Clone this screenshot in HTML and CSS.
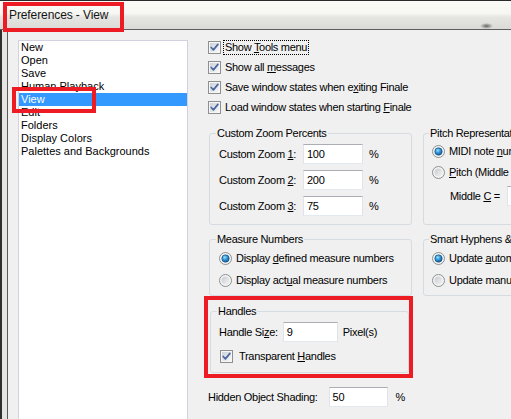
FILE: index.html
```html
<!DOCTYPE html>
<html>
<head>
<meta charset="utf-8">
<title>Preferences - View</title>
<link rel="stylesheet" href="styles.css">
</head>
<body>
<svg class="defs" width="0" height="0" aria-hidden="true">
  <defs>
    <linearGradient id="cbg" x1="0" y1="0" x2="1" y2="1">
      <stop offset="0" stop-color="#cdd1d6"/>
      <stop offset="1" stop-color="#f7f8f9"/>
    </linearGradient>
    <linearGradient id="roff" x1="0" y1="0" x2="1" y2="1">
      <stop offset="0" stop-color="#c8cbcf"/>
      <stop offset="1" stop-color="#f3f4f5"/>
    </linearGradient>
    <radialGradient id="rsel" cx="0.4" cy="0.35" r="0.75">
      <stop offset="0" stop-color="#9ae4fc"/>
      <stop offset="0.45" stop-color="#2f93d6"/>
      <stop offset="1" stop-color="#0b4c8a"/>
    </radialGradient>
    <symbol id="cb" viewBox="0 0 13 13">
      <rect x="0.5" y="0.5" width="12" height="12" fill="#f6f6f6" stroke="#8e8f8f"/>
      <rect x="2" y="2" width="9" height="9" fill="url(#cbg)"/>
      <path d="M3.2 6.5 L5.4 8.9 L9.9 3.4" fill="none" stroke="#4a67a4" stroke-width="1.7" stroke-linecap="round" stroke-linejoin="round"/>
    </symbol>
    <symbol id="rb-on" viewBox="0 0 13 13">
      <circle cx="6.5" cy="6.5" r="6" fill="#f4f4f4" stroke="#8e8f8f"/>
      <circle cx="6.5" cy="6.5" r="3.7" fill="url(#rsel)" stroke="#1d5383" stroke-width="0.7"/>
    </symbol>
    <symbol id="rb-off" viewBox="0 0 13 13">
      <circle cx="6.5" cy="6.5" r="6" fill="#f4f4f4" stroke="#8e8f8f"/>
      <circle cx="6.5" cy="6.5" r="4" fill="url(#roff)"/>
    </symbol>
  </defs>
</svg>

<header class="titlebar">
  <span class="title">Preferences - View</span>
  <span class="glow"></span>
</header>
<div class="annot annot-title"></div>

<div class="content">
  <div class="frame"></div>

  <div class="listpane">
    <ul class="list">
      <li>New</li>
      <li>Open</li>
      <li>Save</li>
      <li>Human Playback</li>
      <li class="sel">View</li>
      <li>Edit</li>
      <li>Folders</li>
      <li>Display Colors</li>
      <li>Palettes and Backgrounds</li>
    </ul>
    <div class="annot annot-view"></div>
  </div>

  <main class="main">
    <div class="checks">
      <label class="chk"><svg class="box"><use href="#cb"/></svg><span class="focus">Show <u>T</u>ools menu</span></label>
      <label class="chk"><svg class="box"><use href="#cb"/></svg><span>Show all <u>m</u>essages</span></label>
      <label class="chk"><svg class="box"><use href="#cb"/></svg><span>Save window states when e<u>x</u>iting Finale</span></label>
      <label class="chk"><svg class="box"><use href="#cb"/></svg><span>Load window states when starting <u>F</u>inale</span></label>
    </div>

    <div class="groups">
      <fieldset class="grp zoom">
        <legend>Custom Zoom Percents</legend>
        <div class="zrow"><span>Custom Zoom <u>1</u>:</span><span class="tb">100</span><span class="unit">%</span></div>
        <div class="zrow"><span>Custom Zoom <u>2</u>:</span><span class="tb">200</span><span class="unit">%</span></div>
        <div class="zrow"><span>Custom Zoom <u>3</u>:</span><span class="tb">75</span><span class="unit">%</span></div>
      </fieldset>

      <fieldset class="grp pitch">
        <legend>Pitch Representation</legend>
        <label class="radio"><svg class="box"><use href="#rb-on"/></svg><span>MIDI note <u>n</u>umber</span></label>
        <label class="radio"><svg class="box"><use href="#rb-off"/></svg><span><u>P</u>itch (Middle C = C4)</span></label>
        <div class="mid"><span>Middle <u>C</u> =</span><span class="tb mid-tb"></span></div>
      </fieldset>

      <fieldset class="grp measure">
        <legend>Measure Numbers</legend>
        <label class="radio"><svg class="box"><use href="#rb-on"/></svg><span>Display <u>d</u>efined measure numbers</span></label>
        <label class="radio"><svg class="box"><use href="#rb-off"/></svg><span>Display act<u>u</u>al measure numbers</span></label>
      </fieldset>

      <fieldset class="grp hyph">
        <legend>Smart Hyphens &amp; Word Extensions</legend>
        <label class="radio"><svg class="box"><use href="#rb-on"/></svg><span>Update <u>a</u>utomatically</span></label>
        <label class="radio"><svg class="box"><use href="#rb-off"/></svg><span>Update manually</span></label>
      </fieldset>
    </div>

    <div class="redwrap">
      <fieldset class="grp handles">
        <legend>Handles</legend>
        <div class="hrow"><span>Handle Si<u>z</u>e:</span><span class="tb hs">9</span><span>Pixel(s)</span></div>
        <label class="chk hchk"><svg class="box"><use href="#cb"/></svg><span>Transparent <u>H</u>andles</span></label>
      </fieldset>
    </div>

    <div class="shade"><span>Hidden Ob<u>j</u>ect Shading:</span><span class="tb sh">50</span><span>%</span></div>
  </main>
</div>
</body>
</html>
```

FILE: styles.css
```css
* { box-sizing: border-box; }
html, body { margin: 0; padding: 0; }
body {
  width: 511px;
  height: 419px;
  overflow: hidden;
  position: relative;
  background: #f0f0f0;
  font-family: "Liberation Sans", Arial, sans-serif;
  font-size: 11px;
  color: #000;
}
u { text-decoration: underline; text-underline-offset: 1px; }
.defs { position: absolute; width: 0; height: 0; }

.titlebar {
  height: 30px;
  border-top: 1px solid #2a2a2a;
  border-bottom: 1px solid #5e5e5e;
  background: linear-gradient(#fafaf7 0%, #f6f6f2 45%, #e5e5e1 58%, #dadad6 100%);
  display: flex;
  align-items: center;
  padding-left: 9px;
  position: relative;
}
.title { font-size: 12px; color: #151515; letter-spacing: -0.1px; }
.glow {
  position: absolute;
  right: 18px;
  bottom: 0;
  width: 13px;
  height: 6px;
  background: radial-gradient(ellipse at center, rgba(60,60,60,0.75), rgba(60,60,60,0) 70%);
}

.annot { position: absolute; border: 4px solid #ed1c24; }
.annot-title { left: 3px; top: 2px; width: 121px; height: 30px; }
.annot-view { left: 4px; top: 57px; width: 84px; height: 26px; }

.content {
  display: grid;
  grid-template-columns: 8px 180px 1fr;
  height: 389px;
}
.frame {
  background: linear-gradient(90deg, #2f2f2c 0 2px, #e4e4e0 2px 7px, #5a5a5a 7px 8px);
}
.listpane {
  position: relative;
  padding: 10px 0 0 10px;
}
.list {
  margin: 0;
  padding: 0;
  list-style: none;
  width: 170px;
  height: 100%;
  background: #fff;
  border: 1px solid #d3d1e0;
  border-bottom: none;
}
.list li {
  line-height: 13px;
  height: 13px;
  padding-left: 2px;
  white-space: nowrap;
}
.list li.sel { background: #3399ff; color: #fff; }

.main {
  padding: 7px 0 0 20px;
  letter-spacing: -0.3px;
  white-space: nowrap;
  overflow: hidden;
}
.box { width: 13px; height: 13px; flex: none; }
.chk {
  display: flex;
  align-items: center;
  gap: 4px;
  height: 20px;
}
.focus {
  outline: 1px dotted #000;
  padding: 0 1px;
  margin-left: -1px;
  line-height: 13px;
}

.groups {
  display: grid;
  grid-template-columns: 203px 200px;
  column-gap: 11px;
  row-gap: 7px;
  margin: 9px 0 0 1px;
}
.grp {
  margin: 0;
  min-width: 0;
  border: 1px solid #d5dbe0;
  border-radius: 3px;
  padding: 0 0 0 9px;
}
.grp legend {
  padding: 0 1px;
  margin-left: -3px;
  line-height: 14px;
}
.tb {
  display: block;
  height: 20px;
  background: #fff;
  border: 1px solid #e2e3ea;
  border-top-color: #abadb3;
  border-bottom-color: #e3e9ef;
  padding-left: 3px;
  line-height: 18px;
}

.zoom { padding-top: 4px; padding-bottom: 8px; display: flex; flex-direction: column; gap: 6px; }
.zrow {
  display: grid;
  grid-template-columns: 84px 60px auto;
  align-items: center;
  height: 20px;
}
.zrow .unit { margin-left: 6px; }

.pitch { padding-left: 8px; padding-top: 1px; }
.radio {
  display: flex;
  align-items: center;
  gap: 4px;
  height: 20px;
}
.pitch .radio + .radio { margin-top: 1px; }
.mid {
  display: flex;
  align-items: center;
  gap: 7px;
  height: 20px;
  margin: 4px 0 0 18px;
}
.mid-tb { width: 60px; }

.measure, .hyph { padding-top: 2px; padding-bottom: 5px; }
.measure .radio + .radio, .hyph .radio + .radio { margin-top: 2px; }
.hyph { padding-left: 8px; }

.redwrap {
  width: 209px;
  margin-left: -4px;
  border: 4px solid #ed1c24;
  padding: 4px 0 1px 2px;
}
.handles {
  width: 199px;
  padding: 4px 0 6px 8px;
}
.handles legend { margin-left: -2px; }
.hrow {
  display: flex;
  align-items: center;
  height: 20px;
}
.hs { width: 55px; margin: 0 5px 0 5px; }
.hchk { margin: 4px 0 0 1px; }
.hchk span { margin-left: 2px; }

.shade {
  display: flex;
  align-items: center;
  height: 20px;
  margin-top: 9px;
}
.sh { width: 59px; margin: 0 8px 0 11px; }
```
